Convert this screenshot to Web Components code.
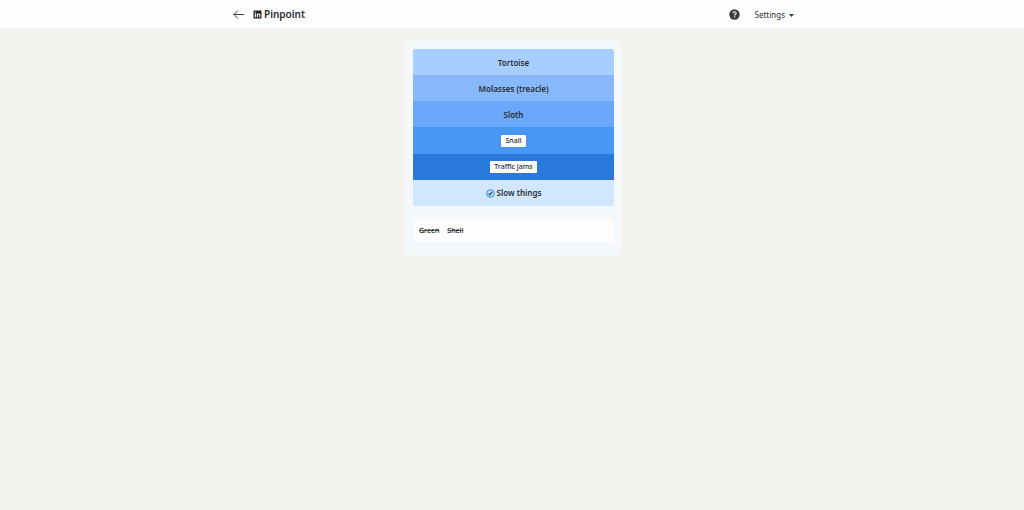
<!DOCTYPE html>
<html lang="en">
<head>
<meta charset="utf-8">
<title>Pinpoint</title>
<style>
body { margin: 0; min-height: 100vh; background: #f3f2ee; color: #2b2d30; font-family: "Noto Sans", "Open Sans", sans-serif; font-size: 8px; }
</style>
</head>
<body>
<game-header name="Pinpoint"></game-header>
<game-board>
  <clue-row style="--row:#a8ceff">Tortoise</clue-row>
  <clue-row style="--row:#87b8fb">Molasses (treacle)</clue-row>
  <clue-row style="--row:#69a8fa">Sloth</clue-row>
  <clue-row style="--row:#4896f6" guess>Snail</clue-row>
  <clue-row style="--row:#2979dc" guess>Traffic jams</clue-row>
  <clue-row style="--row:#d0e7ff" answer>Slow things</clue-row>
  <guess-list slot="footer"><span>Green</span><span>Shell</span></guess-list>
</game-board>
<script>
class GameHeader extends HTMLElement {
  constructor() {
    super();
    this.attachShadow({ mode: "open" }).innerHTML = `
      <style>
        :host { display: block; background: #fdfdfd; }
        header { display: flex; align-items: center; box-sizing: border-box; height: 28px; max-width: 564px; margin: 0 auto; padding-left: 3px; }
        a, button { display: flex; align-items: center; padding: 0; border: 0; background: none; color: inherit; font: inherit; }
        h1 { display: flex; align-items: center; gap: 2px; flex: 1; margin: 0 0 0 9px; font-size: 10px; line-height: 16px; font-weight: 600; }
        .settings { gap: 4px; margin-left: 15px; font-size: 8px; line-height: 16px; padding-top: 2px; }
        svg { display: block; }
      </style>
      <header>
        <a href="#" aria-label="Back"><svg width="11" height="10" viewBox="0 0 11 10" fill="none" stroke="#38393b" stroke-width="1"><path d="M11 5.5H1M5 1.5L1 5.5l4 4"/></svg></a>
        <h1><svg width="9" height="9" viewBox="0 0 9 9"><rect x=".5" y=".5" width="8" height="8" rx=".6" fill="#222426"/><path d="M1.8 3.6h1.1v3.7H1.8zM1.8 1.8h1.1v1H1.8zM3.8 3.6h1v.5c.8-1 2.5-.7 2.5.9v2.3H6.2V5.2c0-1.1-1.3-1-1.3 0v2.1H3.8z" fill="#fdfdfd"/></svg><span></span></h1>
        <button aria-label="Help"><svg width="11" height="11" viewBox="0 0 11 11"><circle cx="5.5" cy="5.5" r="5.2" fill="#38393b"/><path d="M3.9 4.3c0-2.2 3.3-2.1 3.3-.1 0 1.1-1.6 1.1-1.6 2.3" fill="none" stroke="#fff" stroke-width="1.1"/><rect x="5" y="7.3" width="1.2" height="1.2" fill="#fff"/></svg></button>
        <button class="settings">Settings<svg width="5" height="3" viewBox="0 0 5 3"><path d="M0 0h5L2.5 3z" fill="#38393b"/></svg></button>
      </header>`;
    this.shadowRoot.querySelector("span").textContent = this.getAttribute("name");
  }
}

class GameBoard extends HTMLElement {
  constructor() {
    super();
    this.attachShadow({ mode: "open" }).innerHTML = `
      <style>
        :host { display: block; padding: 13px 0 13px 3px; }
        main { box-sizing: border-box; max-width: 217px; margin: 0 auto; padding: 8px 8px 13px; background: #f4f8fb; border-radius: 4px; }
        .rows { display: grid; grid-auto-rows: 1fr; min-height: 157px; border-radius: 2px; overflow: hidden; }
      </style>
      <main><div class="rows"><slot></slot></div><slot name="footer"></slot></main>`;
  }
}

class ClueRow extends HTMLElement {
  constructor() {
    super();
    this.attachShadow({ mode: "open" }).innerHTML = `
      <style>
        :host { display: flex; align-items: center; justify-content: center; gap: 2px; padding-top: 1px; background: var(--row); font-size: 8px; line-height: 12px; font-weight: 600; }
        :host([guess]) span { background: #fcfcfd; border-radius: 1px; padding: 0 4px; font-size: 7px; font-weight: 500; }
        svg { display: none; }
        :host([answer]) svg { display: block; }
      </style>
      <svg width="9" height="9" viewBox="0 0 9 9"><circle cx="4.5" cy="4.5" r="3.8" fill="#b9dafc" stroke="#3d8ae6" stroke-width="1"/><path d="M2.7 4.6l1.2 1.3 2.3-2.7" fill="none" stroke="#29435f" stroke-width="1.2"/></svg><span><slot></slot></span>`;
  }
}

class GuessList extends HTMLElement {
  constructor() {
    super();
    this.attachShadow({ mode: "open" }).innerHTML = `
      <style>
        :host { display: flex; align-items: center; gap: 8px; box-sizing: border-box; min-height: 23px; margin: 13px 1px 0; padding: 1px 5px 0; background: #fdfdfd; font-size: 7px; line-height: 12px; font-weight: 500; color: #111; }
        ::slotted(span) { text-decoration: line-through; text-decoration-color: #1118; }
      </style>
      <slot></slot>`;
  }
}

customElements.define("game-header", GameHeader);
customElements.define("game-board", GameBoard);
customElements.define("clue-row", ClueRow);
customElements.define("guess-list", GuessList);
</script>
</body>
</html>
